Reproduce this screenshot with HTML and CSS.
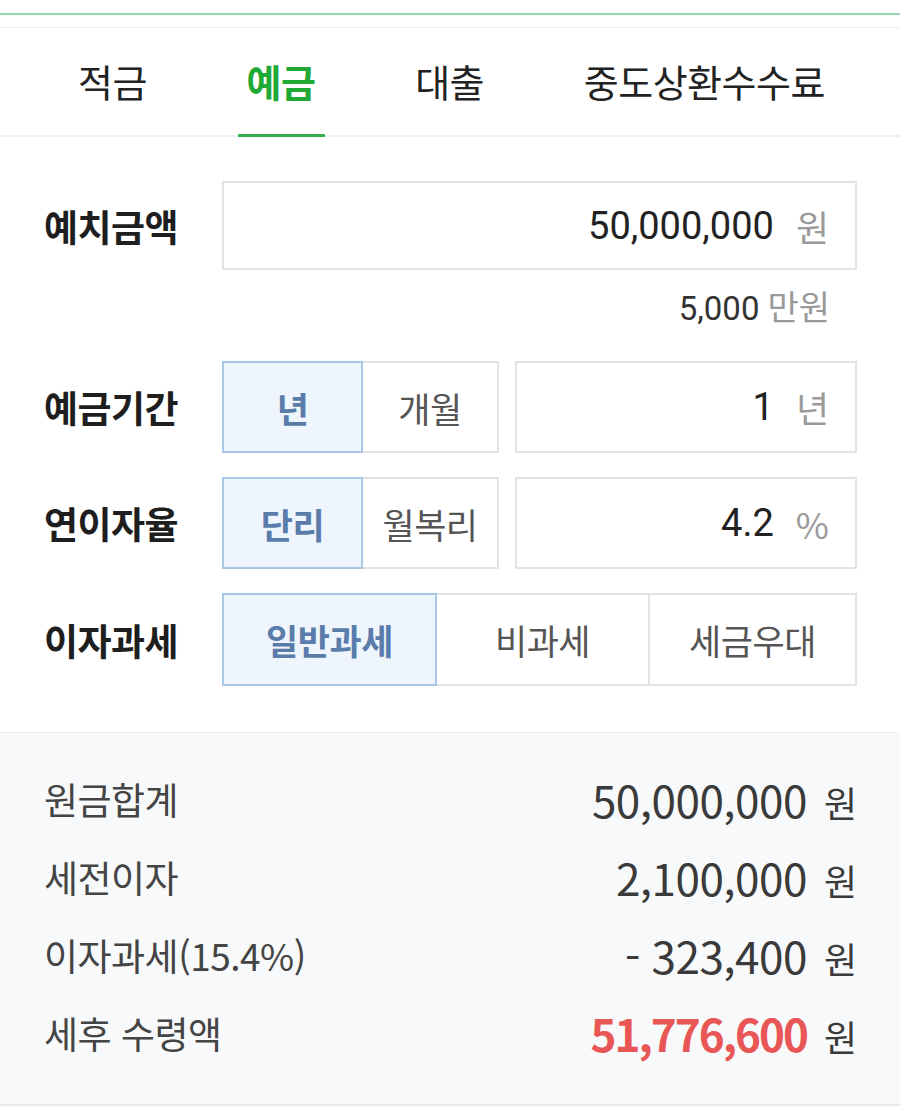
FILE: index.html
```html
<!DOCTYPE html>
<html lang="ko">
<head>
<meta charset="utf-8">
<title>예금 계산기</title>
<link rel="stylesheet" href="styles.css">
</head>
<body>
<div class="topbar"></div>
<nav class="tabs">
  <div class="tab">적금</div>
  <div class="tab active">예금</div>
  <div class="tab">대출</div>
  <div class="tab">중도상환수수료</div>
</nav>

<section class="form">
  <div class="row">
    <div class="label">예치금액</div>
    <div class="field">
      <span class="num">50,000,000</span><span class="unit">원</span>
    </div>
  </div>
  <div class="sub"><span class="num">5,000</span><span class="unit">만원</span></div>

  <div class="row r2">
    <div class="label">예금기간</div>
    <div class="ctrl">
      <div class="seg two">
        <div class="opt on">년</div>
        <div class="opt">개월</div>
      </div>
      <div class="field">
        <span class="num">1</span><span class="unit">년</span>
      </div>
    </div>
  </div>

  <div class="row r3">
    <div class="label">연이자율</div>
    <div class="ctrl">
      <div class="seg two">
        <div class="opt on">단리</div>
        <div class="opt">월복리</div>
      </div>
      <div class="field">
        <span class="num">4.2</span><span class="unit">%</span>
      </div>
    </div>
  </div>

  <div class="row r3 r4">
    <div class="label">이자과세</div>
    <div class="seg three">
      <div class="opt on">일반과세</div>
      <div class="opt">비과세</div>
      <div class="opt">세금우대</div>
    </div>
  </div>
</section>

<section class="result">
  <div class="res-row"><span class="rl">원금합계</span><span class="rv"><span class="amt">50,000,000</span><span class="won">원</span></span></div>
  <div class="res-row"><span class="rl">세전이자</span><span class="rv"><span class="amt">2,100,000</span><span class="won">원</span></span></div>
  <div class="res-row"><span class="rl">이자과세(15.4%)</span><span class="rv"><span class="amt">- 323,400</span><span class="won">원</span></span></div>
  <div class="res-row"><span class="rl">세후 수령액</span><span class="rv"><span class="amt total">51,776,600</span><span class="won">원</span></span></div>
</section>
</body>
</html>
```

FILE: styles.css
```css
* { box-sizing: border-box; }
html, body {
  margin: 0;
  padding: 0;
  background: #ffffff;
  font-family: "Noto Sans CJK KR", "Noto Sans", sans-serif;
  color: #222;
}
.topbar {
  height: 28px;
  border-top: 13px solid #fff;
  border-bottom: 1px solid #eceef0;
  background: linear-gradient(#94d6ad, #94d6ad) 0 0 / 100% 2px no-repeat;
}
.tabs {
  display: flex;
  justify-content: space-between;
  align-items: stretch;
  padding: 0 66px 0 69px;
  height: 109px;
  border-bottom: 2px solid #eef0f2;
}
.tab {
  display: flex;
  align-items: center;
  padding: 0 9px 2px;
  font-size: 38px;
  color: #222;
  letter-spacing: -0.5px;
  margin-bottom: -2px;
  border-bottom: 3px solid transparent;
}
.tab.active {
  color: #1faa36;
  font-weight: 700;
  border-bottom-color: #34b24f;
}
.form {
  padding: 44px 43px 46px 44px;
}
.row {
  display: grid;
  grid-template-columns: 178px 1fr;
  align-items: center;
}
.row.r2 { margin-top: 31px; }
.row.r3 { margin-top: 24px; }
.label {
  font-size: 37px;
  font-weight: 700;
  color: #1e1e1e;
  letter-spacing: -0.5px;
}
.field {
  height: 89px;
  border: 2px solid #e3e3e3;
  display: flex;
  align-items: center;
  justify-content: flex-end;
  padding-right: 26px;
  background: #fff;
}
.r2 .field, .r3 .field { height: 92px; }
.num {
  font-family: Roboto, "Noto Sans CJK KR", sans-serif;
  font-size: 38px;
  color: #222;
}
.unit {
  font-size: 36px;
  color: #9a9a9a;
  margin-left: 22px;
}
.sub {
  display: flex;
  justify-content: flex-end;
  align-items: baseline;
  padding-right: 27px;
  margin-top: 11px;
}
.sub .num { font-size: 33px; color: #333; }
.sub .unit { font-size: 34px; margin-left: 8px; color: #999; }
.ctrl {
  display: grid;
  grid-template-columns: 277px 1fr;
  gap: 16px;
}
.seg {
  display: grid;
  height: 92px;
  border: 2px solid #e3e3e3;
  background: #fff;
}
.r4 .seg { height: 93px; }
.seg.two { grid-template-columns: 139px 1fr; }
.seg.three { grid-template-columns: 213px 211px 1fr; }
.opt {
  display: flex;
  align-items: center;
  justify-content: center;
  font-size: 35px;
  color: #555;
  border-left: 2px solid #e3e3e3;
  letter-spacing: -0.5px;
}
.opt:first-child { border-left: none; }
.opt.on {
  background: #eef5fc;
  color: #5a7cab;
  font-weight: 700;
  margin: -2px 0 -2px -2px;
  border: 2px solid #a9c7e6;
}
.opt.on + .opt { border-left: none; }
.result {
  background: #f8f9fb;
  border-top: 1px solid #eceef1;
  border-bottom: 2px solid #e8eaed;
  padding: 27px 43px 32px 44px;
}
.res-row {
  display: flex;
  justify-content: space-between;
  align-items: center;
  height: 78px;
}
.rl {
  font-size: 37px;
  color: #444;
  letter-spacing: -0.5px;
}
.rv {
  display: flex;
  align-items: baseline;
}
.amt {
  font-size: 44px;
  color: #3a3a3a;
  letter-spacing: -0.5px;
}
.amt.total {
  color: #e85656;
  font-weight: 700;
  letter-spacing: -2px;
}
.won {
  font-size: 36px;
  color: #3a3a3a;
  margin-left: 17px;
}
```
